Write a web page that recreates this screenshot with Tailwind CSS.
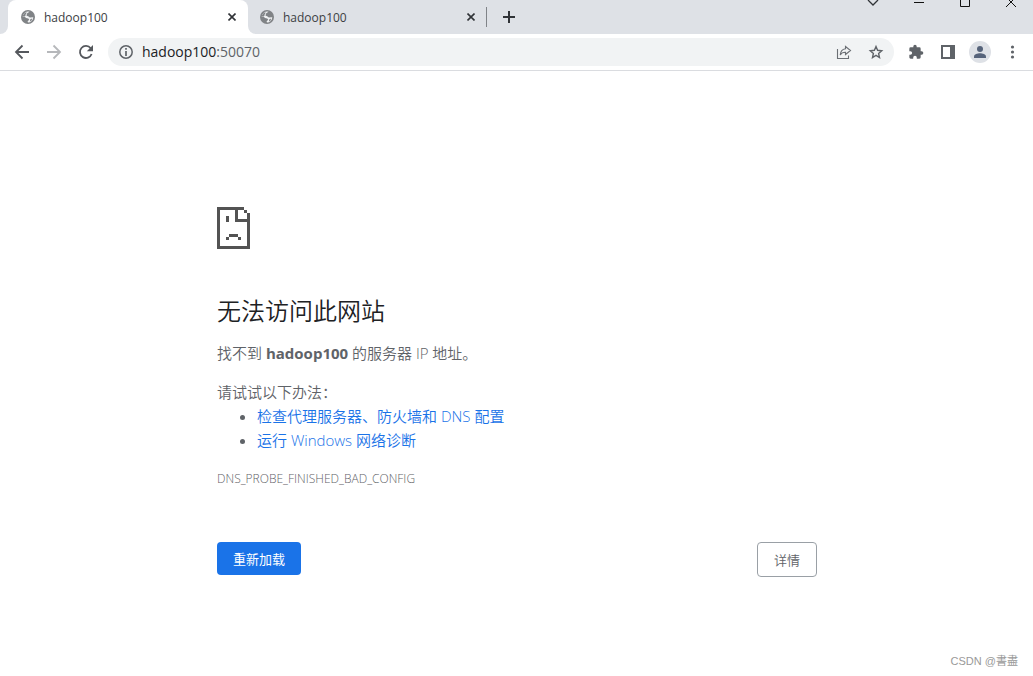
<!DOCTYPE html>
<html lang="zh-CN">
<head>
<meta charset="utf-8">
<meta name="viewport" content="width=device-width, initial-scale=1">
<title>hadoop100</title>
<script src="https://cdn.jsdelivr.net/npm/@tailwindcss/browser@4"></script>
</head>
<body class="flex min-h-screen flex-col bg-white font-['Open_Sans','Noto_Sans_CJK_SC',sans-serif] text-[#5f6368]">
<svg class="hidden" aria-hidden="true">
  <symbol id="globe" viewBox="0 0 14 14"><circle cx="7" cy="7" r="7" fill="#808386"/><path d="M8.600 1.800 6.200 3.300 5.400 5.600 7.600 6.600 8.800 7.600 12.300 7.300A5.500 5.500 0 0 1 7 12.500L6.600 11.300 8.300 9.800 7.300 8.500 5 8 3.600 6.600 1.700 6.800A5.500 5.500 0 0 1 8.600 1.800Z" fill="#f1f3f4"/><path d="M1.800 5.500 4 2.800 6 2.400 4.600 4.600 4.400 6 2.200 6.600ZM9.300 9.200 11.200 8.400 10.600 10.400 8.900 11.500Z" fill="#808386"/></symbol>
  <symbol id="close" viewBox="0 0 8 8"><path d="m.5.5 7 7m0-7-7 7" stroke="#303337" stroke-width="1.6"/></symbol>
</svg>
<header>
  <div class="flex h-[34px] bg-[#dee1e6]">
    <div class="w-2 bg-white"><div class="h-full rounded-br-lg bg-[#dee1e6]"></div></div>
    <div class="flex w-60 items-center rounded-t-lg bg-white pr-3 pl-[13px]">
      <svg class="size-[14px]"><use href="#globe"/></svg>
      <span class="ml-[9px] flex-1 pt-0.5 text-xs text-[#3c4043]">hadoop100</span>
      <button aria-label="关闭标签页"><svg class="size-2"><use href="#close"/></svg></button>
    </div>
    <div class="w-[239px] bg-white">
      <div class="flex h-full items-center rounded-bl-lg bg-[#dee1e6] pr-3 pl-3">
        <svg class="size-[14px]"><use href="#globe"/></svg>
        <span class="ml-[9px] flex-1 pt-0.5 text-xs text-[#3c4043]">hadoop100</span>
        <button aria-label="关闭标签页"><svg class="size-2"><use href="#close"/></svg></button>
      </div>
    </div>
    <div class="flex flex-1 items-center">
      <div class="-ml-px h-5 w-px bg-[#808388]"></div>
      <button class="ml-4" aria-label="新标签页"><svg class="size-3" viewBox="0 0 12 12"><path d="M6 0v12M0 6h12" stroke="#303337" stroke-width="2"/></svg></button>
    </div>
    <div class="flex gap-[34px] pr-4">
      <button class="self-start" aria-label="搜索标签页"><svg class="h-2 w-3" viewBox="0 0 12 8"><path d="m1 0 5 5 5-5" fill="none" stroke="#303337" stroke-width="1.3"/></svg></button>
      <button class="self-start" aria-label="最小化"><svg class="h-2 w-3" viewBox="0 0 12 8"><path d="M1 2.5h10" stroke="#111"/></svg></button>
      <button class="self-start" aria-label="最大化"><svg class="h-2 w-3" viewBox="0 0 12 8"><path d="M1.5 0v6.5h9V0" fill="none" stroke="#111"/></svg></button>
      <button class="self-start" aria-label="关闭"><svg class="h-2 w-3" viewBox="0 0 12 8"><path d="m1 7 7-7M4 0l7 7" fill="none" stroke="#111"/></svg></button>
    </div>
  </div>
  <div class="flex h-[37px] items-center border-b border-[#dadce0] pr-[18px]">
    <nav class="flex w-[108px] gap-4 pl-[14px]">
      <button aria-label="后退"><svg class="size-4" viewBox="0 0 16 16"><path d="M15 8H2m6.500-6.500L2 8l6.500 6.500" fill="none" stroke="#55585d" stroke-width="1.800"/></svg></button>
      <button aria-label="前进"><svg class="size-4" viewBox="0 0 16 16"><path d="M1 8h13M7.500 1.500 14 8l-6.500 6.500" fill="none" stroke="#b6b8bb" stroke-width="1.800"/></svg></button>
      <button aria-label="重新加载此页"><svg class="size-4" viewBox="0 0 16 16"><path d="M13.600 10a6 6 0 1 1-.9-5.700" fill="none" stroke="#55585d" stroke-width="1.800"/><path d="M15 1v6.200H8.800Z" fill="#55585d"/></svg></button>
    </nav>
    <div class="flex h-7 flex-1 items-center rounded-full bg-[#f1f3f4] pr-[10px] pl-[11px]">
      <svg class="size-[14px]" viewBox="0 0 14 14"><circle cx="7" cy="7" r="6.200" fill="none" stroke="#5f6368" stroke-width="1.500"/><path d="M7 3v1.700M7 6v5" stroke="#5f6368" stroke-width="1.700"/></svg>
      <div class="ml-[9px] flex-1 text-sm"><span class="text-[#202124]">hadoop100</span>:50070</div>
      <button aria-label="分享此页"><svg class="size-4" viewBox="0 0 16 16"><path d="M1.500 5v9.500h11v-3M9.500 2.500l5 4-5 4V8.300C7 8.200 5.400 9 4.200 11 4.500 7.500 6.400 5.200 9.500 4.800Z" fill="none" stroke="#6b6f74" stroke-width="1.100"/></svg></button>
      <button class="ml-4" aria-label="为此标签页添加书签"><svg class="size-4" viewBox="0 0 16 16"><path d="m8 2.500 1.600 3.800 4.100.4-3.100 2.700.9 4.100L8 11.400l-3.500 2.100.9-4.100-3.100-2.700 4.100-.4Z" fill="none" stroke="#5f6368" stroke-width="1.400"/></svg></button>
    </div>
    <button class="ml-3.5" aria-label="扩展程序"><svg class="size-4" viewBox="0 0 24 24"><path d="M20.500 11H19V7a2 2 0 0 0-2-2h-4V3.500a2.500 2.500 0 0 0-5 0V5H4a2 2 0 0 0-2 2v3.800h1.500a2.700 2.700 0 0 1 0 5.400H2V20c0 1.100.9 2 2 2h3.800v-1.500a2.700 2.700 0 0 1 5.400 0V22H17a2 2 0 0 0 2-2v-4h1.500a2.500 2.500 0 0 0 0-5Z" fill="#5f6368"/></svg></button>
    <button class="ml-[17px]" aria-label="侧边栏"><svg class="size-[14px]" viewBox="0 0 14 14"><path fill-rule="evenodd" d="M0 0h14v14H0zM2 2v10h7V2z" fill="#5f6368"/></svg></button>
    <button class="ml-[14px]" aria-label="用户"><svg class="size-[22px]" viewBox="0 0 22 22"><circle cx="11" cy="11" r="11" fill="#dee1e6"/><circle cx="11" cy="8" r="3" fill="#56637a"/><path d="M5 17v-1.500c0-2 3.500-3.200 6-3.200s6 1.200 6 3.200V17Z" fill="#56637a"/></svg></button>
    <button class="ml-[19px]" aria-label="菜单"><svg class="h-[14px] w-[5px]" viewBox="0 0 5 14"><g fill="#5f6368"><circle cx="2.500" cy="2" r="1.600"/><circle cx="2.500" cy="7" r="1.600"/><circle cx="2.500" cy="12" r="1.600"/></g></svg></button>
  </div>
</header>
<main class="mx-auto w-full max-w-[601px] flex-1 pt-[136px] pl-px text-[15px] leading-6 font-[350]">
  <svg class="h-[42px] w-[33px]" viewBox="0 0 11 14" shape-rendering="crispEdges"><path d="M0 0h9v1H7v3h3V2h1v12H0V0zM1 1v12h9V5H6V1zM9 1h1v1H9zM3 3h1v2H3zM4 9h3v1H4zM3 10h1v1H3zM7 10h1v1H7z" fill="#535353" fill-rule="evenodd"/></svg>
  <h1 class="mt-11 text-2xl leading-9 font-[350] text-[#202124]">无法访问此网站</h1>
  <p class="mt-3">找不到 <strong class="font-bold">hadoop100</strong> 的服务器 IP 地址。</p>
  <p class="mt-[15px]">请试试以下办法：</p>
  <ul class="list-disc pl-10">
    <li><a href="#" class="text-[#1a73e8]">检查代理服务器、防火墙和 DNS 配置</a></li>
    <li><a href="#" class="text-[#1a73e8]">运行 Windows 网络诊断</a></li>
  </ul>
  <p class="mt-[15px] text-xs leading-6 font-light">DNS_PROBE_FINISHED_BAD_CONFIG</p>
  <div class="mt-[51px] flex items-start justify-between text-[13px]">
    <button class="h-[33px] rounded bg-[#1a73e8] px-4 font-normal text-white">重新加载</button>
    <button class="h-[35px] rounded border border-[#9aa0a6] px-4">详情</button>
  </div>
</main>
<footer class="pr-[15px] pb-[6px] text-right font-['Liberation_Sans','Noto_Sans_CJK_TC',sans-serif] text-[11px] leading-[18px] text-[#999]">CSDN @書盡</footer>
</body>
</html>
